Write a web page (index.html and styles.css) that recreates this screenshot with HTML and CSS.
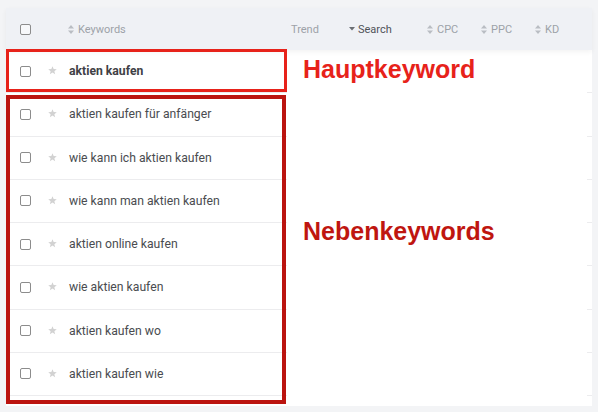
FILE: index.html
```html
<!DOCTYPE html>
<html lang="de">
<head>
<meta charset="utf-8">
<title>Keywords</title>
<link rel="stylesheet" href="styles.css">
</head>
<body>
<div class="card">
  <div class="thead">
    <span class="cb"></span>
    <span class="th th-kw"><svg class="sort" viewBox="0 0 6 9" width="6" height="9"><path d="M3 0L6 3.6H0Z M3 9L6 5.4H0Z"/></svg>Keywords</span>
    <span class="th th-trend">Trend</span>
    <span class="th th-search"><svg class="caret" viewBox="0 0 6 4" width="6" height="4"><path d="M0 0H6L3 3.5Z"/></svg>Search</span>
    <span class="th th-cpc"><svg class="sort" viewBox="0 0 6 9" width="6" height="9"><path d="M3 0L6 3.6H0Z M3 9L6 5.4H0Z"/></svg>CPC</span>
    <span class="th th-ppc"><svg class="sort" viewBox="0 0 6 9" width="6" height="9"><path d="M3 0L6 3.6H0Z M3 9L6 5.4H0Z"/></svg>PPC</span>
    <span class="th th-kd"><svg class="sort" viewBox="0 0 6 9" width="6" height="9"><path d="M3 0L6 3.6H0Z M3 9L6 5.4H0Z"/></svg>KD</span>
  </div>
  <div class="rows">
    <div class="row"><span class="cb"></span><svg class="star" viewBox="0 0 24 23" width="9" height="9"><path d="M12 0l3.1 7.6 8.2.6-6.3 5.3 2 8-7-4.4-7 4.4 2-8L.7 8.2l8.2-.6z"/></svg><span class="kw main">aktien kaufen</span></div>
    <div class="row"><span class="cb"></span><svg class="star" viewBox="0 0 24 23" width="9" height="9"><path d="M12 0l3.1 7.6 8.2.6-6.3 5.3 2 8-7-4.4-7 4.4 2-8L.7 8.2l8.2-.6z"/></svg><span class="kw">aktien kaufen für anfänger</span></div>
    <div class="row"><span class="cb"></span><svg class="star" viewBox="0 0 24 23" width="9" height="9"><path d="M12 0l3.1 7.6 8.2.6-6.3 5.3 2 8-7-4.4-7 4.4 2-8L.7 8.2l8.2-.6z"/></svg><span class="kw">wie kann ich aktien kaufen</span></div>
    <div class="row"><span class="cb"></span><svg class="star" viewBox="0 0 24 23" width="9" height="9"><path d="M12 0l3.1 7.6 8.2.6-6.3 5.3 2 8-7-4.4-7 4.4 2-8L.7 8.2l8.2-.6z"/></svg><span class="kw">wie kann man aktien kaufen</span></div>
    <div class="row"><span class="cb"></span><svg class="star" viewBox="0 0 24 23" width="9" height="9"><path d="M12 0l3.1 7.6 8.2.6-6.3 5.3 2 8-7-4.4-7 4.4 2-8L.7 8.2l8.2-.6z"/></svg><span class="kw">aktien online kaufen</span></div>
    <div class="row"><span class="cb"></span><svg class="star" viewBox="0 0 24 23" width="9" height="9"><path d="M12 0l3.1 7.6 8.2.6-6.3 5.3 2 8-7-4.4-7 4.4 2-8L.7 8.2l8.2-.6z"/></svg><span class="kw">wie aktien kaufen</span></div>
    <div class="row"><span class="cb"></span><svg class="star" viewBox="0 0 24 23" width="9" height="9"><path d="M12 0l3.1 7.6 8.2.6-6.3 5.3 2 8-7-4.4-7 4.4 2-8L.7 8.2l8.2-.6z"/></svg><span class="kw">aktien kaufen wo</span></div>
    <div class="row"><span class="cb"></span><svg class="star" viewBox="0 0 24 23" width="9" height="9"><path d="M12 0l3.1 7.6 8.2.6-6.3 5.3 2 8-7-4.4-7 4.4 2-8L.7 8.2l8.2-.6z"/></svg><span class="kw">aktien kaufen wie</span></div>
  </div>
  <div class="cover"></div>
</div>
<div class="box box-main"></div>
<div class="box box-side"></div>
<div class="label label-main">Hauptkeyword</div>
<div class="label label-side">Nebenkeywords</div>
</body>
</html>
```

FILE: styles.css
```css
html, body {
  margin: 0;
  padding: 0;
}
body {
  width: 598px;
  height: 412px;
  background: #f3f4f6;
  font-family: Roboto, "Noto Sans", Arial, sans-serif;
  overflow: hidden;
  position: relative;
}
.card {
  position: relative;
  z-index: 0;
  margin: 8px 0 0 6px;
  width: 586px;
  height: 398px;
  background: #ffffff;
}
.thead {
  position: relative;
  z-index: 2;
  height: 42px;
  display: flex;
  align-items: center;
  padding-left: 14px;
  background: #eff1f5;
  box-shadow: 0 2px 5px rgba(0, 0, 0, 0.05);
  font-size: 11px;
  color: #9da2a8;
}
.cb {
  box-sizing: border-box;
  width: 11px;
  height: 11px;
  border: 1.3px solid #8c8c8c;
  border-radius: 2px;
  background: #fff;
  flex: none;
}
.thead .cb {
  background: #f7f8fa;
}
.th {
  display: flex;
  align-items: center;
  flex: none;
}
.sort {
  fill: #b9bdc3;
  margin-right: 4px;
}
.caret {
  fill: #6a6e73;
  margin-right: 3px;
}
.th-kw { margin-left: 37px; width: 223px; }
.th-trend { width: 58px; }
.th-search { width: 78px; color: #4f5358; }
.th-cpc { width: 54px; }
.th-ppc { width: 54px; }
.th-kd { width: 40px; }
.rows {
  display: flex;
  flex-direction: column;
}
.row {
  box-sizing: border-box;
  height: 43.25px;
  display: flex;
  align-items: center;
  padding-left: 14px;
  border-bottom: 1px solid #ececee;
}
.star {
  fill: #d2d2d2;
  margin-left: 16.5px;
  margin-top: -1px;
  flex: none;
}
.kw {
  margin-left: 12.5px;
  font-size: 12.2px;
  color: #4a4c50;
}
.kw.main {
  font-weight: 700;
  color: #3f4145;
}
.cover {
  position: absolute;
  z-index: 1;
  left: 281px;
  top: 44px;
  width: 300px;
  height: 354px;
  background: #ffffff;
}
.box {
  position: absolute;
  z-index: 3;
  box-sizing: border-box;
  left: 6px;
}
.box-main {
  top: 49px;
  width: 281px;
  height: 43px;
  border: 3.5px solid #e7221a;
}
.box-side {
  top: 95px;
  width: 280px;
  height: 309px;
  border: 4px solid #bb140f;
}
.label {
  position: absolute;
  z-index: 3;
  left: 303px;
  font-family: "Liberation Sans", Arial, sans-serif;
  font-weight: 700;
  font-size: 25px;
  line-height: 25px;
}
.label-main {
  top: 56.5px;
  color: #e7221a;
}
.label-side {
  top: 219px;
  color: #bf1610;
}
```
